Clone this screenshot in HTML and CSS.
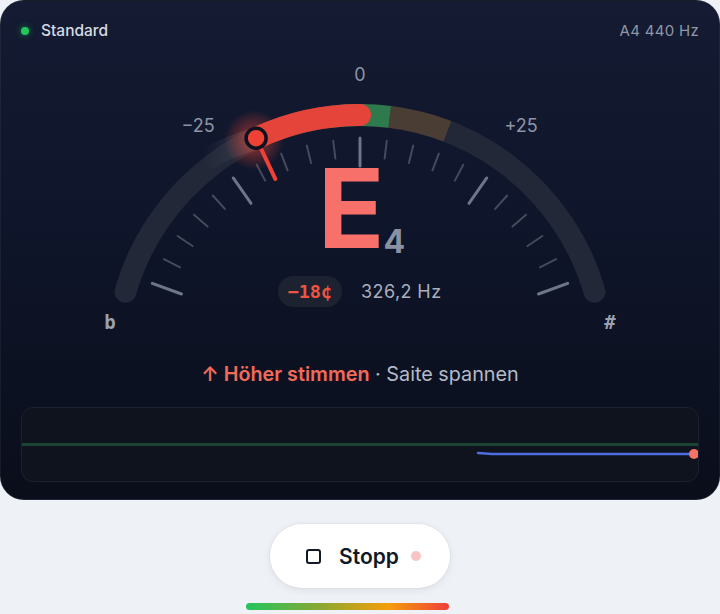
FILE: index.html
```html
<!DOCTYPE html>
<html lang="de">
<head>
    <meta charset="UTF-8">
    <meta name="viewport" content="width=device-width, initial-scale=1.0">
    <title>Stimmgerät</title>
    <link rel="stylesheet" href="styles.css">
</head>
<body>
    <div class="tuner">
        <div class="tuner-head">
            <div class="preset"><span class="preset-dot"></span>Standard</div>
            <div class="reference">A4 440 Hz</div>
        </div>

        <div class="gauge">
            <!-- viewBox verschoben, damit die Koordinaten denen der Karte entsprechen -->
            <svg class="gauge-svg" width="720" height="285" viewBox="0 60 720 285">
                <defs>
                    <radialGradient id="glow">
                        <stop offset="0" stop-color="#ff4a35" stop-opacity="0.6"/>
                        <stop offset="1" stop-color="#ff4a35" stop-opacity="0"/>
                    </radialGradient>
                    <linearGradient id="trail" x1="0" y1="0" x2="1" y2="0">
                        <stop offset="0" stop-color="#3a3f50" stop-opacity="0"/>
                        <stop offset="1" stop-color="#3a3f50" stop-opacity="0.9"/>
                    </linearGradient>
                </defs>

                <!-- Grundbogen -->
                <path d="M125.5 291.7 A244 244 0 0 1 594.5 291.7" fill="none" stroke="#232838" stroke-width="22" stroke-linecap="round"/>
                <!-- Nachleuchten links vom Zeiger -->
                <path d="M205 160 A244 244 0 0 1 256.1 138.2" fill="none" stroke="url(#trail)" stroke-width="22"/>
                <!-- Zonen: leicht daneben / im Ton -->
                <path d="M272.6 131.2 A244 244 0 0 1 330.3 116.8" fill="none" stroke="#493c33" stroke-width="22"/>
                <path d="M389.7 116.8 A244 244 0 0 1 447.4 131.2" fill="none" stroke="#4a3d33" stroke-width="22"/>
                <path d="M330.3 116.8 A244 244 0 0 1 389.7 116.8" fill="none" stroke="#2f7a4c" stroke-width="22"/>

                <!-- Skalenstriche, alle 5 Cent (1,4° pro Cent) -->
                <g stroke-linecap="round">
                    <line class="tick-major" x1="360" y1="138" x2="360" y2="169" transform="rotate(-70 360 359)"/>
                    <line class="tick-minor" x1="360" y1="139" x2="360" y2="157" transform="rotate(-63 360 359)"/>
                    <line class="tick-minor" x1="360" y1="139" x2="360" y2="157" transform="rotate(-56 360 359)"/>
                    <line class="tick-minor" x1="360" y1="139" x2="360" y2="157" transform="rotate(-49 360 359)"/>
                    <line class="tick-minor" x1="360" y1="139" x2="360" y2="157" transform="rotate(-42 360 359)"/>
                    <line class="tick-major" x1="360" y1="138" x2="360" y2="169" transform="rotate(-35 360 359)"/>
                    <line class="tick-minor" x1="360" y1="139" x2="360" y2="157" transform="rotate(-28 360 359)"/>
                    <line class="tick-minor" x1="360" y1="139" x2="360" y2="157" transform="rotate(-21 360 359)"/>
                    <line class="tick-minor" x1="360" y1="139" x2="360" y2="157" transform="rotate(-14 360 359)"/>
                    <line class="tick-minor" x1="360" y1="139" x2="360" y2="157" transform="rotate(-7 360 359)"/>
                    <line class="tick-major" x1="360" y1="138" x2="360" y2="166"/>
                    <line class="tick-minor" x1="360" y1="139" x2="360" y2="157" transform="rotate(7 360 359)"/>
                    <line class="tick-minor" x1="360" y1="139" x2="360" y2="157" transform="rotate(14 360 359)"/>
                    <line class="tick-minor" x1="360" y1="139" x2="360" y2="157" transform="rotate(21 360 359)"/>
                    <line class="tick-minor" x1="360" y1="139" x2="360" y2="157" transform="rotate(28 360 359)"/>
                    <line class="tick-major" x1="360" y1="138" x2="360" y2="169" transform="rotate(35 360 359)"/>
                    <line class="tick-minor" x1="360" y1="139" x2="360" y2="157" transform="rotate(42 360 359)"/>
                    <line class="tick-minor" x1="360" y1="139" x2="360" y2="157" transform="rotate(49 360 359)"/>
                    <line class="tick-minor" x1="360" y1="139" x2="360" y2="157" transform="rotate(56 360 359)"/>
                    <line class="tick-minor" x1="360" y1="139" x2="360" y2="157" transform="rotate(63 360 359)"/>
                    <line class="tick-major" x1="360" y1="138" x2="360" y2="169" transform="rotate(70 360 359)"/>
                </g>

                <text class="scale-label" x="198" y="131.5">−25</text>
                <text class="scale-label" x="360" y="80.5">0</text>
                <text class="scale-label" x="521" y="131.5">+25</text>
                <text class="scale-sign" x="110" y="329">b</text>
                <text class="scale-sign" x="610" y="329">#</text>

                <!-- Abweichung: -18 Cent -->
                <circle cx="254" cy="140" r="30" fill="url(#glow)"/>
                <path d="M256.1 138.2 A244 244 0 0 1 360 115" fill="none" stroke="#e5443a" stroke-width="22" stroke-linecap="round"/>
                <line x1="256.1" y1="138.2" x2="275.3" y2="178.9" stroke="#ef4136" stroke-width="4" stroke-linecap="round"/>
                <circle cx="256.1" cy="138.2" r="10" fill="#ef4136" stroke="#0d1220" stroke-width="3.5"/>
            </svg>

            <div class="readout">
                <div class="note">E<span class="octave">4</span></div>
                <div class="values">
                    <span class="cents">−18¢</span>
                    <span class="freq">326,2 Hz</span>
                </div>
            </div>
        </div>

        <div class="hint"><span class="hint-action">↑ Höher stimmen</span> · Saite spannen</div>

        <div class="history">
            <svg width="678" height="73" viewBox="0 0 678 73">
                <rect x="0" y="35" width="678" height="3" fill="#1c4536"/>
                <polyline points="456,45 470,46 672,46" fill="none" stroke="#4f6de0" stroke-width="2.5" stroke-linecap="round"/>
                <circle cx="672" cy="46" r="5" fill="#f87166"/>
            </svg>
        </div>
    </div>

    <div class="controls">
        <button class="stop-btn">
            <span class="stop-icon"></span>
            Stopp
            <span class="live-dot"></span>
        </button>
        <div class="level-bar"></div>
    </div>
</body>
</html>
```

FILE: styles.css
```css
/* Stimmgerät */
body {
    margin: 0;
    background-color: #eef1f6;
    font-family: Inter, "Noto Sans", sans-serif;
    color: #111827;
}

.tuner {
    height: 500px;
    box-sizing: border-box;
    background: linear-gradient(180deg, #141b32 0%, #0f152a 45%, #0a0e1b 100%);
    border-radius: 24px;
    border: 1px solid rgba(255, 255, 255, 0.05);
    display: flex;
    flex-direction: column;
    overflow: hidden;
}

.tuner-head {
    height: 59px;
    padding: 0 20px;
    display: flex;
    align-items: center;
    justify-content: space-between;
}

.preset {
    display: flex;
    align-items: center;
    gap: 12px;
    font-size: 15.5px;
    font-weight: 500;
    color: #d6dae3;
}

.preset-dot {
    width: 8px;
    height: 8px;
    border-radius: 50%;
    background-color: #22c55e;
    box-shadow: 0 0 6px rgba(34, 197, 94, 0.6);
}

.reference {
    font-size: 15px;
    color: #9097a8;
    letter-spacing: 0.3px;
}

/* --- Skala --- */
.gauge {
    position: relative;
    height: 285px;
    margin-left: -1px;
}

.gauge-svg {
    position: absolute;
    top: 0;
    left: 0;
}

.tick-major {
    stroke: #6e7586;
    stroke-width: 3;
}

.tick-minor {
    stroke: #454b5b;
    stroke-width: 2;
}

.scale-label {
    font-family: Inter, sans-serif;
    font-size: 18px;
    fill: #8d94a5;
    text-anchor: middle;
}

.scale-sign {
    font-family: "DejaVu Sans Mono", monospace;
    font-weight: bold;
    font-size: 19px;
    fill: #9ba1b0;
    text-anchor: middle;
}

.readout {
    position: absolute;
    top: 93px;
    left: 0;
    right: 0;
    display: flex;
    flex-direction: column;
    align-items: center;
}

.note {
    font-size: 110px;
    font-weight: 700;
    line-height: 110px;
    color: #f7716a;
    padding-left: 4px;
}

.octave {
    font-size: 32px;
    font-weight: 700;
    line-height: 1;
    color: #8a91a3;
    margin-left: -1px;
    position: relative;
    top: 5px;
}

.values {
    margin-top: 13px;
    display: flex;
    align-items: center;
    gap: 19px;
}

.cents {
    height: 31px;
    padding: 0 10px;
    border-radius: 16px;
    background-color: #1d2230;
    display: flex;
    align-items: center;
    font-family: "DejaVu Sans Mono", monospace;
    font-weight: bold;
    font-size: 18.5px;
    color: #f0533f;
}

.freq {
    font-size: 18px;
    color: #a9afbe;
    letter-spacing: 0.4px;
}

.hint {
    margin-top: 17px;
    text-align: center;
    font-size: 19.8px;
    line-height: 24px;
    color: #b4bac8;
}

.hint-action {
    color: #f46a59;
    font-weight: 600;
}

.history {
    margin: 21px 20px 0 20px;
    height: 73px;
    border: 1px solid #1c2130;
    border-radius: 12px;
    background-color: #0f131e;
    overflow: hidden;
}

.history svg {
    display: block;
}

/* --- Steuerung --- */
.controls {
    display: flex;
    flex-direction: column;
    align-items: center;
}

.stop-btn {
    margin-top: 24px;
    width: 180px;
    height: 64px;
    padding: 0 0 0 7px;
    border: none;
    border-radius: 32px;
    background-color: #ffffff;
    box-shadow: 0 2px 8px rgba(15, 23, 42, 0.08), 0 0 0 1px rgba(15, 23, 42, 0.03);
    display: flex;
    align-items: center;
    justify-content: center;
    font-family: Inter, sans-serif;
    font-size: 21px;
    font-weight: 600;
    color: #111827;
}

.stop-icon {
    width: 11px;
    height: 11px;
    border: 2px solid #111827;
    border-radius: 3px;
    margin-right: 18px;
}

.live-dot {
    width: 10px;
    height: 10px;
    border-radius: 50%;
    background-color: #f6c4c4;
    margin-left: 12px;
}

.level-bar {
    margin-top: 15px;
    margin-left: -26px;
    width: 203px;
    height: 7px;
    border-radius: 4px;
    background: linear-gradient(90deg, #22c55e 0%, #84a934 35%, #f59e0b 70%, #ef3f3a 100%);
}
```
